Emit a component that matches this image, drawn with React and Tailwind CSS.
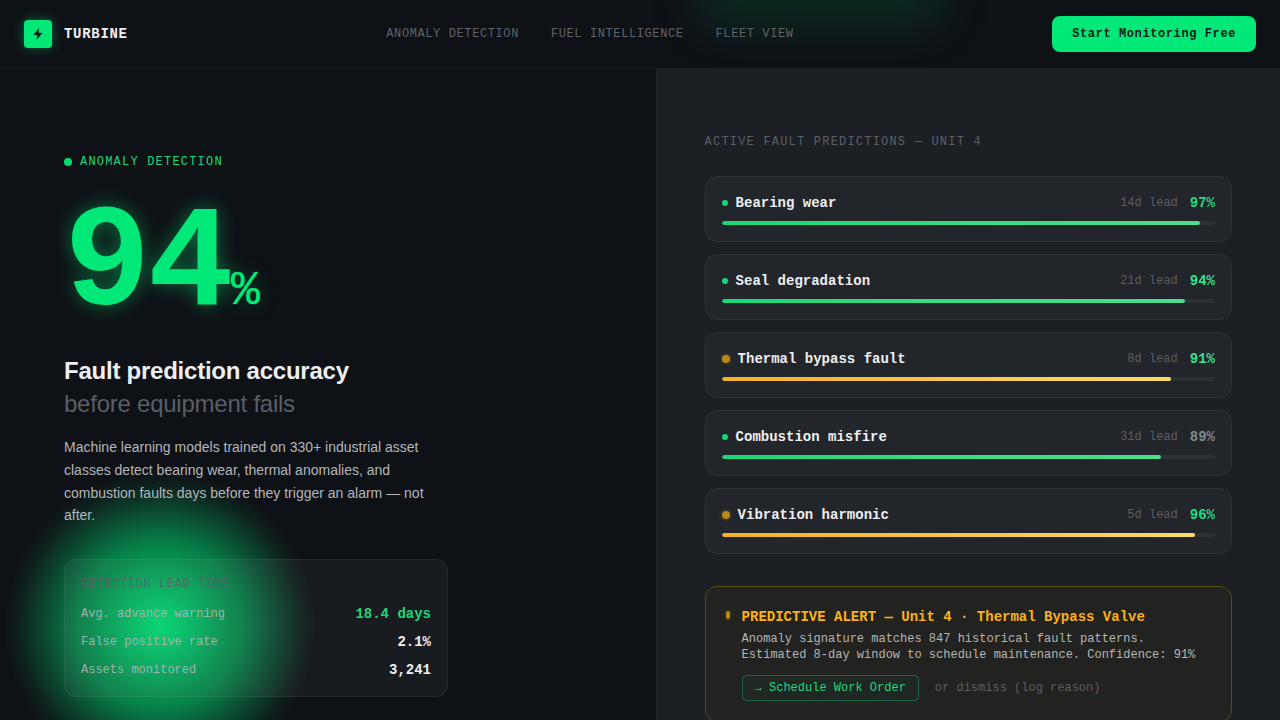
const MONO = "font-['Liberation_Mono',monospace]";

const navLinks = ["ANOMALY DETECTION", "FUEL INTELLIGENCE", "FLEET VIEW"];

const stats = [
  { label: "Avg. advance warning", value: "18.4 days", color: "text-[#1fd57a]" },
  { label: "False positive rate", value: "2.1%", color: "text-[#eeeff1]" },
  { label: "Assets monitored", value: "3,241", color: "text-[#eeeff1]" },
];

const faults = [
  { name: "Bearing wear", lead: "14d lead", pct: 97, tone: "ok", color: "text-[#1fdb80]" },
  { name: "Seal degradation", lead: "21d lead", pct: 94, tone: "ok", color: "text-[#38e08e]" },
  { name: "Thermal bypass fault", lead: "8d lead", pct: 91, tone: "warn", color: "text-[#38e08e]" },
  { name: "Combustion misfire", lead: "31d lead", pct: 89, tone: "ok", color: "text-[#85888d]" },
  { name: "Vibration harmonic", lead: "5d lead", pct: 96, tone: "warn", color: "text-[#1fdb80]" },
];

function Header() {
  return (
    <header className="relative z-10 flex items-center justify-between border-b border-[#1b1e21] px-6 py-4">
      <a href="#home" className="flex items-center gap-3">
        <span className="flex size-7 items-center justify-center rounded bg-[#00e878] shadow-[0_0_12px_rgba(0,232,120,0.4)]">
          <svg viewBox="0 0 14 14" className="size-3.5" fill="#0b2015" aria-hidden="true">
            <path d="M8 1 2.5 8H6.3L5.6 13 11.5 5.8H7.6Z" />
          </svg>
        </span>
        <span className={`${MONO} text-sm font-bold tracking-wider text-[#eeeff1]`}>TURBINE</span>
      </a>
      <nav className="flex gap-8">
        {navLinks.map((link) => (
          <a key={link} href="#section" className={`${MONO} text-xs tracking-wider text-[#5f6368]`}>
            {link}
          </a>
        ))}
      </nav>
      <button
        type="button"
        className={`${MONO} rounded-lg bg-[#00e878] px-5 py-2.5 text-xs font-bold tracking-wider text-[#0b2015]`}
      >
        Start Monitoring Free
      </button>
    </header>
  );
}

function Summary() {
  return (
    <section className="px-16 pt-[85px] pb-21">
      <div className="flex items-center gap-2">
        <span className="size-2 rounded-full bg-[#00e070]" />
        <p className={`${MONO} text-xs tracking-widest text-[#1fd57a]`}>ANOMALY DETECTION</p>
      </div>
      <p
        className={`${MONO} mt-6 flex items-baseline text-[144px] leading-none font-bold tracking-[-0.02em] text-[#00e878] [text-shadow:0_0_20px_rgba(0,232,120,0.45)]`}
      >
        94
        <span className="text-5xl leading-none font-normal [text-shadow:0_0_1px_rgba(0,232,120,0.8),0_0_20px_rgba(0,232,120,0.3)]">
          %
        </span>
      </p>
      <h1 className="mt-4 text-2xl leading-[33px] font-bold tracking-[-0.01em] text-[#eeeff1]">
        Fault prediction accuracy
        <br />
        <span className="font-normal text-[#5b5e65]">before equipment fails</span>
      </h1>
      <p className="mt-4 max-w-sm text-sm leading-relaxed text-[#b4b6b9]">
        Machine learning models trained on 330+ industrial asset classes detect bearing wear, thermal anomalies, and
        combustion faults days before they trigger an alarm — not after.
      </p>
      <div className="mt-8 max-w-sm rounded-xl border border-white/6 bg-[#96969b]/8 p-4">
        <h2 className={`${MONO} text-xs tracking-wider text-[#5b5e65]/80`}>DETECTION LEAD TIME</h2>
        <dl className={`${MONO} mt-3 flex flex-col gap-2`}>
          {stats.map((s) => (
            <div key={s.label} className="flex items-center justify-between">
              <dt className="text-xs text-[#b4b6b9]/90">{s.label}</dt>
              <dd className={`text-sm font-bold ${s.color}`}>{s.value}</dd>
            </div>
          ))}
        </dl>
      </div>
    </section>
  );
}

function FaultCard({ fault }) {
  const ok = fault.tone === "ok";
  return (
    <li className={`${MONO} rounded-xl border border-[#2d3035] bg-[#22252a] p-4`}>
      <div className="flex items-center justify-between">
        <div className="flex items-center gap-2">
          <span
            className={
              ok
                ? "size-1.5 rounded-full bg-[#0fdc76]"
                : "size-2 rounded-full bg-[#b98712] shadow-[0_0_4px_rgba(245,180,20,0.3)]"
            }
          />
          <h3 className="text-sm font-bold text-[#eeeff1]">{fault.name}</h3>
        </div>
        <div className="flex items-center gap-3">
          <span className="text-xs text-[#5b5e63]">{fault.lead}</span>
          <span className={`text-sm font-bold ${fault.color}`}>{fault.pct}%</span>
        </div>
      </div>
      <div className="mt-2 h-1 overflow-hidden rounded-full bg-[#2d3035]">
        <div
          className={`h-full rounded-full bg-linear-to-r ${ok ? "from-[#14d977] to-[#4ade8e]" : "from-[#f3b124] to-[#fcdb66]"}`}
          style={{ width: `${fault.pct}%` }}
        />
      </div>
    </li>
  );
}

function Alert() {
  return (
    <div className={`${MONO} mt-8 flex items-start gap-3 rounded-xl border border-[#594818] bg-[#222320] p-5`}>
      <span className="mt-1 h-2 w-1 shrink-0 rounded-[50%] bg-[#c28c10] shadow-[0_0_4px_rgba(245,180,20,0.3)]" />
      <div>
        <h3 className="text-sm font-bold text-[#fbb117]">PREDICTIVE ALERT — Unit 4 · Thermal Bypass Valve</h3>
        <p className="mt-1 text-xs text-[#b4b5b4]">
          Anomaly signature matches 847 historical fault patterns.
          <br />
          Estimated 8-day window to schedule maintenance. Confidence: 91%
        </p>
        <div className="mt-3 flex items-center gap-4">
          <button
            type="button"
            className="rounded border border-[#1b6443] bg-[#202723] px-3 py-1 text-xs text-[#1fd880]"
          >
            → Schedule Work Order
          </button>
          <button type="button" className="text-xs text-[#5c5e5e]">
            or dismiss (log reason)
          </button>
        </div>
      </div>
    </div>
  );
}

export default function App() {
  return (
    <div className="relative min-h-screen overflow-hidden bg-[#0e1116] font-['Liberation_Sans',sans-serif]">
      <div aria-hidden="true" className="pointer-events-none absolute inset-0">
        <div className="absolute top-[470px] left-[4px] size-[312px] rounded-full bg-[radial-gradient(closest-side,rgba(0,232,120,0.94)_0%,rgba(0,232,120,0.72)_28%,rgba(0,232,120,0.5)_54%,rgba(0,232,120,0.24)_76%,rgba(0,232,120,0.08)_90%,transparent_100%)]" />
        <div className="absolute -top-12 left-[700px] h-18 w-60 bg-[#00e878]/12 blur-xl" />
      </div>
      <Header />
      <main className="relative grid grid-cols-[1.05fr_1fr]">
        <Summary />
        <section className="border-l border-[#1f2227] bg-[#1c1f24] px-12 pt-[65px] pb-16">
          <h2 className={`${MONO} text-xs tracking-widest text-[#5b5f67]`}>ACTIVE FAULT PREDICTIONS — UNIT 4</h2>
          <ul className="mt-[26px] flex flex-col gap-3">
            {faults.map((fault) => (
              <FaultCard key={fault.name} fault={fault} />
            ))}
          </ul>
          <Alert />
        </section>
      </main>
    </div>
  );
}
